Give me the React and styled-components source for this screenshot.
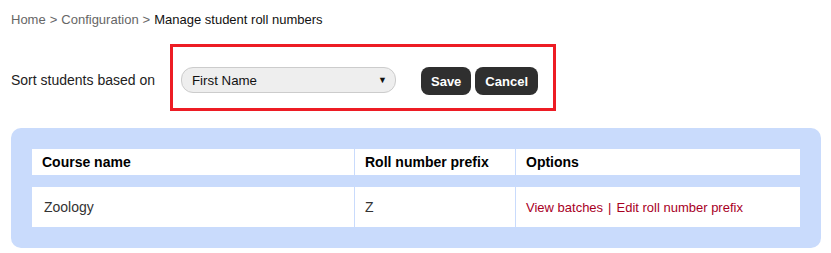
import React from "react";
import styled, { createGlobalStyle } from "styled-components";

const GlobalStyle = createGlobalStyle`
  body {
    margin: 0;
    background: #fff;
    font-family: "Liberation Sans", Arial, sans-serif;
    color: #222;
  }
`;

const courses = [{ name: "Zoology", prefix: "Z" }];

function App() {
  return (
    <Page>
      <GlobalStyle />
      <Breadcrumb>
        <Crumb>Home</Crumb>
        <Sep>&gt;</Sep>
        <Crumb>Configuration</Crumb>
        <Sep>&gt;</Sep>
        <Current>Manage student roll numbers</Current>
      </Breadcrumb>

      <SortRow>
        <SortLabel>Sort students based on</SortLabel>
        <Highlight>
          <FakeSelect>
            <span>First Name</span>
            <Arrow>▼</Arrow>
          </FakeSelect>
          <Buttons>
            <DarkButton>Save</DarkButton>
            <DarkButton>Cancel</DarkButton>
          </Buttons>
        </Highlight>
      </SortRow>

      <Panel>
        <Table>
          <colgroup>
            <col style={{ width: 322 }} />
            <col style={{ width: 161 }} />
            <col />
          </colgroup>
          <thead>
            <tr>
              <HeadCell>Course name</HeadCell>
              <HeadCell $divider>Roll number prefix</HeadCell>
              <HeadCell $divider>Options</HeadCell>
            </tr>
          </thead>
          <tbody>
            {courses.map(c => (
              <tr key={c.name}>
                <Cell $pad={12}>{c.name}</Cell>
                <Cell $divider>{c.prefix}</Cell>
                <Cell $divider>
                  <Link>View batches</Link>
                  <LinkSep>|</LinkSep>
                  <Link>Edit roll number prefix</Link>
                </Cell>
              </tr>
            ))}
          </tbody>
        </Table>
      </Panel>
    </Page>
  );
}

export default App;

const Page = styled.div`
  width: 831px;
  height: 253px;
  padding: 9px 10px 0 10px;
  box-sizing: border-box;
`;

const Breadcrumb = styled.div`
  display: flex;
  align-items: center;
  height: 20px;
  font-size: 13px;
  color: #666;
  padding-left: 1px;
`;

const Crumb = styled.span`
  color: #666;
`;

const Sep = styled.span`
  color: #666;
  margin: 0 4px;
`;

const Current = styled.span`
  color: #111;
`;

const SortRow = styled.div`
  display: flex;
  align-items: center;
  margin-top: 15px;
`;

const SortLabel = styled.span`
  box-sizing: border-box;
  font-size: 14px;
  color: #222;
  width: 160px;
  padding-left: 1px;
  margin-top: 4px;
`;

const Highlight = styled.div`
  display: flex;
  align-items: flex-start;
  width: 386px;
  box-sizing: border-box;
  border: 3px solid #ed1c24;
  padding: 20px 15px 13px 8px;
`;

const FakeSelect = styled.div`
  display: flex;
  align-items: center;
  justify-content: space-between;
  width: 215px;
  height: 26px;
  box-sizing: border-box;
  padding: 0 8px 0 10px;
  background: #eeeeee;
  border: 1px solid #cccccc;
  border-radius: 12px;
  font-size: 13.3px;
  color: #111;
`;

const Arrow = styled.span`
  font-size: 9px;
  color: #111;
  margin-top: -1px;
`;

const Buttons = styled.div`
  display: flex;
  gap: 4px;
  margin-left: 25px;
`;

const DarkButton = styled.button`
  height: 28px;
  padding: 0 10px;
  border: none;
  border-radius: 8px;
  background: #2f2f2f;
  color: #fff;
  font-family: "Liberation Sans", Arial, sans-serif;
  font-weight: bold;
  font-size: 13px;
  cursor: pointer;
`;

const Panel = styled.div`
  margin-top: 17px;
  margin-left: 1px;
  width: 810px;
  box-sizing: border-box;
  padding: 9px 21px;
  background: #c9dbfc;
  border-radius: 10px;
`;

const Table = styled.table`
  width: 100%;
  table-layout: fixed;
  border-collapse: separate;
  border-spacing: 0 12px;
`;

const HeadCell = styled.th`
  height: 26px;
  padding: 0 0 0 10px;
  background: #fff;
  text-align: left;
  font-size: 14px;
  font-weight: bold;
  color: #000;
  border-left: ${p => (p.$divider ? "1px solid #c9dbfc" : "none")};
`;

const Cell = styled.td`
  height: 40px;
  padding: 0 0 0 ${p => (p.$pad ? p.$pad : 10)}px;
  background: #fff;
  font-size: 14px;
  color: #333;
  border-left: ${p => (p.$divider ? "1px solid #c9dbfc" : "none")};
`;

const Link = styled.a`
  color: #a8001f;
  font-size: 13px;
  cursor: pointer;
`;

const LinkSep = styled.span`
  color: #a8001f;
  font-size: 13px;
  margin: 0 5px;
`;
